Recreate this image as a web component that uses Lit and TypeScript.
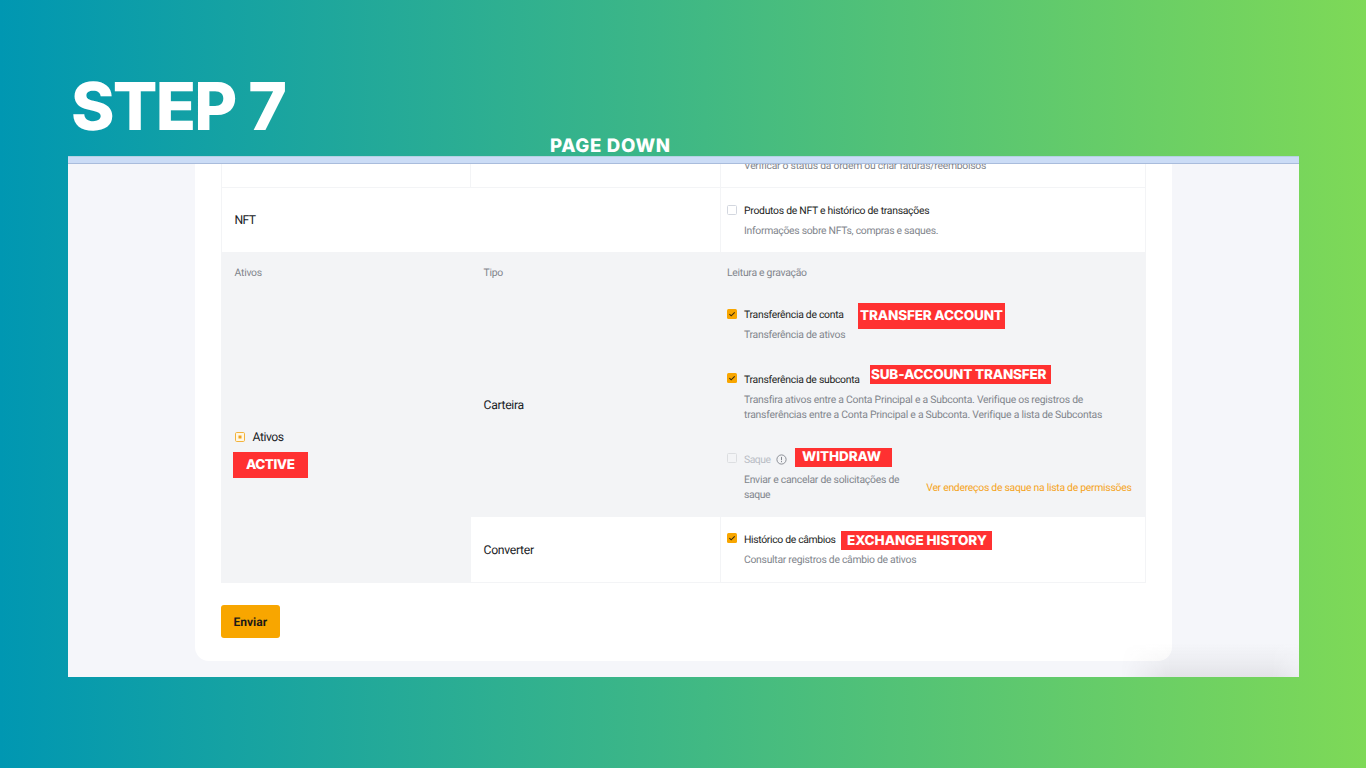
import { LitElement, html, css, svg, nothing } from "lit";
import { customElement, property } from "lit/decorators.js";

/** Single line of text whose tracking is adjusted so it fills a given width. */
@customElement("fit-text")
class FitText extends LitElement {
  @property({ type: Number }) w = 0;
  @property() text = "";
  static styles = css`
    :host { display: block; white-space: nowrap; width: max-content; }
    .t { display: inline-block; text-rendering: geometricPrecision; }
  `;
  render() {
    return html`<span class="t">${this.text}</span>`;
  }
  firstUpdated() {
    this.fit();
    document.fonts?.ready.then(() => this.fit());
  }
  fit() {
    const el = this.renderRoot.querySelector(".t") as HTMLElement;
    el.style.letterSpacing = "0px";
    const natural = el.getBoundingClientRect().width;
    const n = [...this.text].length;
    if (this.w && n > 1) el.style.letterSpacing = `${(this.w - natural) / (n - 1)}px`;
  }
}

const t = (text: string, w: number) => html`<fit-text .text=${text} .w=${w}></fit-text>`;

type Line = [string, number];
interface Perm {
  title: Line;
  desc: Line[];
  state: "on" | "off" | "disabled";
}

@customElement("perm-item")
class PermItem extends LitElement {
  @property({ attribute: false }) perm!: Perm;
  static styles = css`
    :host { display: grid; grid-template-columns: 10px 1fr; column-gap: 7px; }
    .box { width: 10px; height: 10px; margin-top: 1.5px; display: block; }
    .title { display: flex; gap: 5px; align-items: center; height: 16px; line-height: 16px; font-size: 10.4px; color: #1c1e23; }
    .title.disabled { color: #b9bdc5; }
    .info { width: 11px; height: 11px; display: block; }
    .desc { margin-top: 4px; font-size: 10.4px; line-height: 15.5px; color: #81858c; }
  `;
  render() {
    const { title, desc, state } = this.perm;
    const off = state === "disabled" ? "#dcdee1" : "#d3d7df";
    return html`
      <svg class="box" viewBox="0 0 10 10">
        ${state === "on"
          ? svg`<rect width="10" height="10" rx="1.5" fill="#f8a600"/><path d="M2.4 5.1 4.2 6.8 7.7 3.4" fill="none" stroke="#3a2b0c" stroke-width="1.1"/>`
          : svg`<rect x=".5" y=".5" width="9" height="9" rx="1" fill="none" stroke=${off}/>`}
      </svg>
      <div>
        <div class="title ${state}">
          ${t(...title)}
          ${state === "disabled"
            ? html`<svg class="info" viewBox="0 0 11 11" fill="none" stroke="#81858c"><circle cx="5.5" cy="5.5" r="4.6" stroke-width=".9"/><path d="M5.5 2.9v3.3M5.5 7.1v1.1"/></svg>`
            : nothing}
        </div>
        <div class="desc">${desc.map((d) => t(...d))}</div>
      </div>
    `;
  }
}

const perm = (title: Line, desc: Line[], state: Perm["state"]) =>
  html`<perm-item .perm=${{ title, desc, state }}></perm-item>`;

@customElement("app-root")
class AppRoot extends LitElement {
  static styles = css`
    :host { display: block; width: 1366px; height: 768px; overflow: hidden; font-family: Roboto, "Noto Sans", sans-serif; background: linear-gradient(90deg, #0097b2, #7ed957); }
    .page { box-sizing: border-box; height: 768px; padding: 68px 67px 0 68px; display: grid; grid-template-rows: 88px 521px; }
    .head { display: flex; color: #fff; font-family: Inter, sans-serif; font-weight: 800; }
    .step { margin-left: 3px; width: 479px; font-size: 66px; line-height: 77px; }
    .down { font-size: 18.6px; line-height: 24px; margin-top: 65px; }
    .shot { position: relative; overflow: hidden; background: #f5f6fa; display: grid; grid-template-rows: 8px 1fr; }
    .bar { box-sizing: border-box; background: #cbdcf6; border-bottom: 1px solid #a9bcdc; border-top: 1px solid #b4d2e2; }
    .card { margin-left: 127px; width: 977px; height: 497px; box-sizing: border-box; padding-left: 26px; background: #fff; border-radius: 0 0 14px 14px; }
    .table { width: 925px; display: grid; grid-template-columns: 249px 250px 426px; grid-template-rows: 24px 65px 40px 224px 66px; box-sizing: border-box; }
    .c { box-sizing: border-box; border-left: 1px solid #f3f4f6; border-bottom: 1px solid #f3f4f6; display: flex; align-items: center; padding-left: 12.6px; font-size: 12.2px; color: #202226; overflow: hidden; }
    .c:nth-child(9) { padding-left: 13px; }
    .last { border-right: 1px solid #f3f4f6; padding-left: 6px; }
    .two { grid-column: span 2; }
    .g { background: #f3f4f6; }
    .th { font-size: 10.4px; color: #81858c; }
    .cut { align-items: flex-start; padding-left: 23px; font-size: 10.4px; color: #81858c; }
    .cut fit-text { line-height: 16px; margin-top: -6.4px; }
    .tall { grid-row: 4 / 6; grid-column: 1; gap: 7.5px; padding-bottom: 2px; padding-left: 12px; }
    .mixed { width: 10px; height: 10px; display: block; }
    .stack { flex-direction: column; align-items: stretch; padding-top: 15px; }
    .stack.first { padding-top: 14px; }
    .stack.end { padding-top: 14.5px; }
    .sub { margin-top: 29px; }
    .wd { display: flex; justify-content: space-between; margin-top: 29px; }
    .link { font-size: 10.4px; line-height: 16px; color: #f5a31a; margin: 28.5px 13.5px 0 0; }
    .send { margin-top: 22px; width: 59px; height: 33px; border: 0; padding: 0 0 0 12.6px; border-radius: 3px; background: #f8a600; color: #1c1a17; font: 700 12px Roboto, sans-serif; display: flex; align-items: center; }
    .dock { position: absolute; right: 0; bottom: 0; width: 178px; height: 34px; background: linear-gradient(transparent, rgba(80, 75, 80, .04) 45%, rgba(80, 75, 80, .1)); mask-image: linear-gradient(90deg, transparent, #000 28%, #000 85%, rgba(0, 0, 0, .45)); }
    .tag { position: absolute; box-sizing: border-box; background: #ff3131; color: #fff; font: 800 13.5px/1 Inter, sans-serif; display: flex; align-items: center; }
    .a { left: 790px; top: 147px; width: 147px; height: 26px; padding: 0 0 0 2px; }
    .b { left: 802px; top: 209px; width: 181px; height: 19px; padding: 2px 0 0 1px; }
    .w { left: 727px; top: 292px; width: 97px; height: 19px; padding: 0 0 0 7px; }
    .x { left: 773px; top: 375px; width: 151px; height: 19px; padding: 2px 0 0 6px; }
    .v { left: 165px; top: 295.5px; width: 75px; height: 26.5px; padding: 1px 0 0 13px; }
  `;
  render() {
    return html`
      <main class="page">
        <header class="head">
          <div class="step">${t("STEP 7", 216)}</div>
          <div class="down">${t("PAGE DOWN", 120)}</div>
        </header>
        <section class="shot">
          <div class="bar"></div>
          <div class="card">
            <div class="table">
              <div class="c"></div>
              <div class="c"></div>
              <div class="c last cut">${t("Verificar o status da ordem ou criar faturas/reembolsos", 242)}</div>

              <div class="c two">${t("NFT", 21.5)}</div>
              <div class="c last stack">
                ${perm(["Produtos de NFT e histórico de transações", 185.5], [["Informações sobre NFTs, compras e saques.", 194.5]], "off")}
              </div>

              <div class="c g th">${t("Ativos", 27.5)}</div>
              <div class="c g th">${t("Tipo", 19.5)}</div>
              <div class="c g th last">${t("Leitura e gravação", 80)}</div>

              <div class="c g tall">
                <svg class="mixed" viewBox="0 0 10 10"><rect x=".5" y=".5" width="9" height="9" rx="1.2" fill="#fff7e4" stroke="#f3b33c"/><rect x="3.5" y="3.5" width="3" height="3" fill="#f2a41c"/></svg>
                ${t("Ativos", 31.5)}
              </div>
              <div class="c g">${t("Carteira", 40.5)}</div>
              <div class="c g last stack first">
                ${perm(["Transferência de conta", 100], [["Transferência de ativos", 101.5]], "on")}
                <div class="sub">
                  ${perm(
                    ["Transferência de subconta", 116],
                    [
                      ["Transfira ativos entre a Conta Principal e a Subconta. Verifique os registros de", 338.5],
                      ["transferências entre a Conta Principal e a Subconta. Verifique a lista de Subcontas", 358],
                    ],
                    "on",
                  )}
                </div>
                <div class="wd">
                  ${perm(["Saque", 27], [["Enviar e cancelar de solicitações de", 155.5], ["saque", 26.5]], "disabled")}
                  <div class="link">${t("Ver endereços de saque na lista de permissões", 205.5)}</div>
                </div>
              </div>

              <div class="c">${t("Converter", 50.5)}</div>
              <div class="c last stack end">
                ${perm(["Histórico de câmbios", 92], [["Consultar registros de câmbio de ativos", 172.5]], "on")}
              </div>
            </div>
            <button class="send">${t("Enviar", 33.5)}</button>
          </div>
          <div class="dock"></div>
          <div class="tag a">${t("TRANSFER ACCOUNT", 143)}</div>
          <div class="tag b">${t("SUB-ACCOUNT TRANSFER", 175.5)}</div>
          <div class="tag w">${t("WITHDRAW", 79)}</div>
          <div class="tag x">${t("EXCHANGE HISTORY", 140)}</div>
          <div class="tag v">${t("ACTIVE", 49)}</div>
        </section>
      </main>
    `;
  }
}
